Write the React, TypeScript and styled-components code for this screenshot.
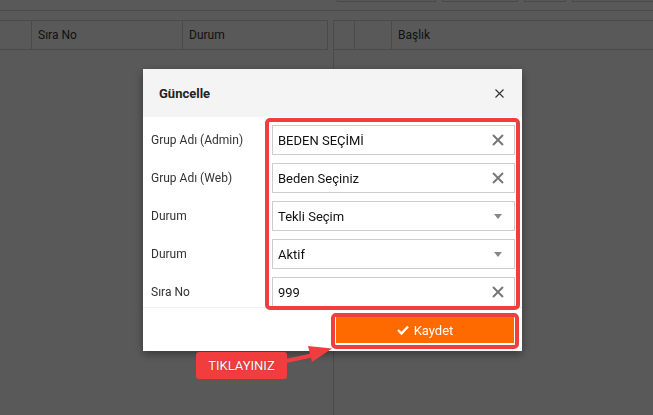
import styled, { createGlobalStyle } from 'styled-components'

const red = '#f23d3f'
const lineColor = '#d4d4d4'

const GlobalStyle = createGlobalStyle`
  html, body {
    margin: 0;
    padding: 0;
    background: #ffffff;
    font-family: Roboto, "Liberation Sans", Arial, sans-serif;
    overflow: hidden;
  }
`

const Page = styled.div`
  width: 653px;
  height: 415px;
  display: flex;
  flex-direction: column;
  background: #ffffff;
`

const Toolbar = styled.div`
  height: 10px;
  border-bottom: 1px solid ${lineColor};
  display: flex;
  align-items: flex-start;
  padding-left: 337px;
  gap: 6px;
`

const ToolButton = styled.div<{ $w: number }>`
  width: ${({ $w }) => $w}px;
  height: 1px;
  border: 1px solid ${lineColor};
  border-top: none;
  flex-shrink: 0;
`

const Panels = styled.div`
  flex: 1;
  display: flex;
  gap: 5px;
  padding-top: 9px;
`

const LeftPanel = styled.div`
  width: 328px;
`

const RightPanel = styled.div`
  flex: 1;
  border-left: 1px solid ${lineColor};
  border-top: 1px solid ${lineColor};
`

const HeaderRow = styled.div<{ $cols: string; $edge?: boolean }>`
  display: grid;
  grid-template-columns: ${({ $cols }) => $cols};
  height: 28px;
  border-top: ${({ $edge }) => ($edge ? `1px solid ${lineColor}` : 'none')};
  border-bottom: 1px solid ${lineColor};
  border-right: ${({ $edge }) => ($edge ? `1px solid ${lineColor}` : 'none')};
`

const HeaderCell = styled.div`
  display: flex;
  align-items: center;
  padding-left: 6px;
  font-size: 12px;
  color: #333;
  border-left: 1px solid ${lineColor};

  &:first-child {
    border-left: none;
  }
`

const Overlay = styled.div`
  position: fixed;
  inset: 0;
  background: rgba(0, 0, 0, 0.65);
`

const Modal = styled.div`
  margin: 69px 0 0 143px;
  width: 379px;
  background: #fff;
  box-shadow: 0 3px 9px rgba(0, 0, 0, 0.4);
  display: flex;
  flex-direction: column;
`

const ModalHeader = styled.div`
  height: 48px;
  background: #f4f4f4;
  display: flex;
  align-items: center;
  justify-content: space-between;
  padding: 0 18px 0 16px;
`

const Title = styled.div`
  font-size: 13px;
  font-weight: 700;
  color: #222;
`

const CloseIcon = styled.svg`
  width: 9px;
  height: 9px;
  margin-top: 1px;
`

const Body = styled.div`
  padding: 8px 7px 0 8px;
  display: flex;
  flex-direction: column;
  gap: 8px;
  border-bottom: 1px solid #eeeeee;
  padding-bottom: 0;
`

const FieldRow = styled.div`
  display: grid;
  grid-template-columns: 121px 1fr;
  align-items: center;
  height: 30px;
`

const Label = styled.div`
  font-size: 12px;
  color: #333;
`

const Input = styled.div`
  height: 28px;
  border: 1px solid #cccccc;
  display: flex;
  align-items: center;
  justify-content: space-between;
  padding: 0 10px 0 5px;
  font-size: 13px;
  color: #111;
`

const ClearIcon = styled.svg`
  width: 12px;
  height: 12px;
`

const Caret = styled.div`
  width: 0;
  height: 0;
  border-left: 4px solid transparent;
  border-right: 4px solid transparent;
  border-top: 5px solid #888;
  margin-right: 2px;
`

const Footer = styled.div`
  display: flex;
  justify-content: flex-end;
  padding: 9px 8px 8px 0;
`

const SaveButton = styled.div`
  width: 178px;
  height: 26px;
  background: #ff6a00;
  color: #fff;
  font-size: 13px;
  display: flex;
  align-items: center;
  justify-content: center;
  gap: 5px;
`

const Highlight = styled.div<{ $x: number; $y: number; $w: number; $h: number }>`
  position: absolute;
  left: ${({ $x }) => $x}px;
  top: ${({ $y }) => $y}px;
  width: ${({ $w }) => $w}px;
  height: ${({ $h }) => $h}px;
  box-sizing: border-box;
  border: 4px solid ${red};
  border-radius: 5px;
`

const Callout = styled.div`
  position: absolute;
  left: 196px;
  top: 352px;
  width: 91px;
  height: 27px;
  background: ${red};
  border-radius: 3px;
  color: #fff;
  font-size: 13px;
  display: flex;
  align-items: center;
  justify-content: center;
  text-shadow: 0 0 1px rgba(0, 0, 0, 0.5);
`

const Arrow = styled.svg`
  position: absolute;
  left: 280px;
  top: 340px;
  width: 60px;
  height: 30px;
`

const Clear = () => (
  <ClearIcon viewBox="0 0 12 12">
    <path d="M1 1L11 11M11 1L1 11" stroke="#777" strokeWidth="2" />
  </ClearIcon>
)

const fields = [
  { label: 'Grup Adı (Admin)', value: 'BEDEN SEÇİMİ', kind: 'text' },
  { label: 'Grup Adı (Web)', value: 'Beden Seçiniz', kind: 'text' },
  { label: 'Durum', value: 'Tekli Seçim', kind: 'select' },
  { label: 'Durum', value: 'Aktif', kind: 'select' },
  { label: 'Sıra No', value: '999', kind: 'text' },
]

export default function App() {
  return (
    <>
      <GlobalStyle />
      <Page>
        <Toolbar>
          <ToolButton $w={97} />
          <ToolButton $w={74} />
          <ToolButton $w={40} />
          <ToolButton $w={90} />
        </Toolbar>
        <Panels>
          <LeftPanel>
            <HeaderRow $cols="31px 151px 1fr" $edge>
              <HeaderCell />
              <HeaderCell>Sıra No</HeaderCell>
              <HeaderCell>Durum</HeaderCell>
            </HeaderRow>
          </LeftPanel>
          <RightPanel>
            <HeaderRow $cols="20px 37px 1fr">
              <HeaderCell />
              <HeaderCell />
              <HeaderCell>Başlık</HeaderCell>
            </HeaderRow>
          </RightPanel>
        </Panels>
      </Page>
      <Overlay>
        <Modal>
          <ModalHeader>
            <Title>Güncelle</Title>
            <CloseIcon viewBox="0 0 9 9">
              <path d="M0.5 0.5L8.5 8.5M8.5 0.5L0.5 8.5" stroke="#333" strokeWidth="1.1" />
            </CloseIcon>
          </ModalHeader>
          <Body>
            {fields.map((f, i) => (
              <FieldRow key={i}>
                <Label>{f.label}</Label>
                <Input>
                  <span>{f.value}</span>
                  {f.kind === 'text' ? <Clear /> : <Caret />}
                </Input>
              </FieldRow>
            ))}
          </Body>
          <Footer>
            <SaveButton>
              <svg width="12" height="10" viewBox="0 0 12 10">
                <path d="M1 5L4.5 8.5L11 1.5" stroke="#fff" strokeWidth="2.4" fill="none" />
              </svg>
              Kaydet
            </SaveButton>
          </Footer>
        </Modal>
        <Highlight $x={265} $y={118} $w={255} $h={192} />
        <Highlight $x={331} $y={313} $w={188} $h={36} />
        <Callout>TIKLAYINIZ</Callout>
        <Arrow viewBox="0 0 60 30">
          <path d="M6 21L34 15" stroke={red} strokeWidth="4" strokeLinecap="round" />
          <path d="M28 6L52 8.5L32 22Z" fill={red} />
        </Arrow>
      </Overlay>
    </>
  )
}
